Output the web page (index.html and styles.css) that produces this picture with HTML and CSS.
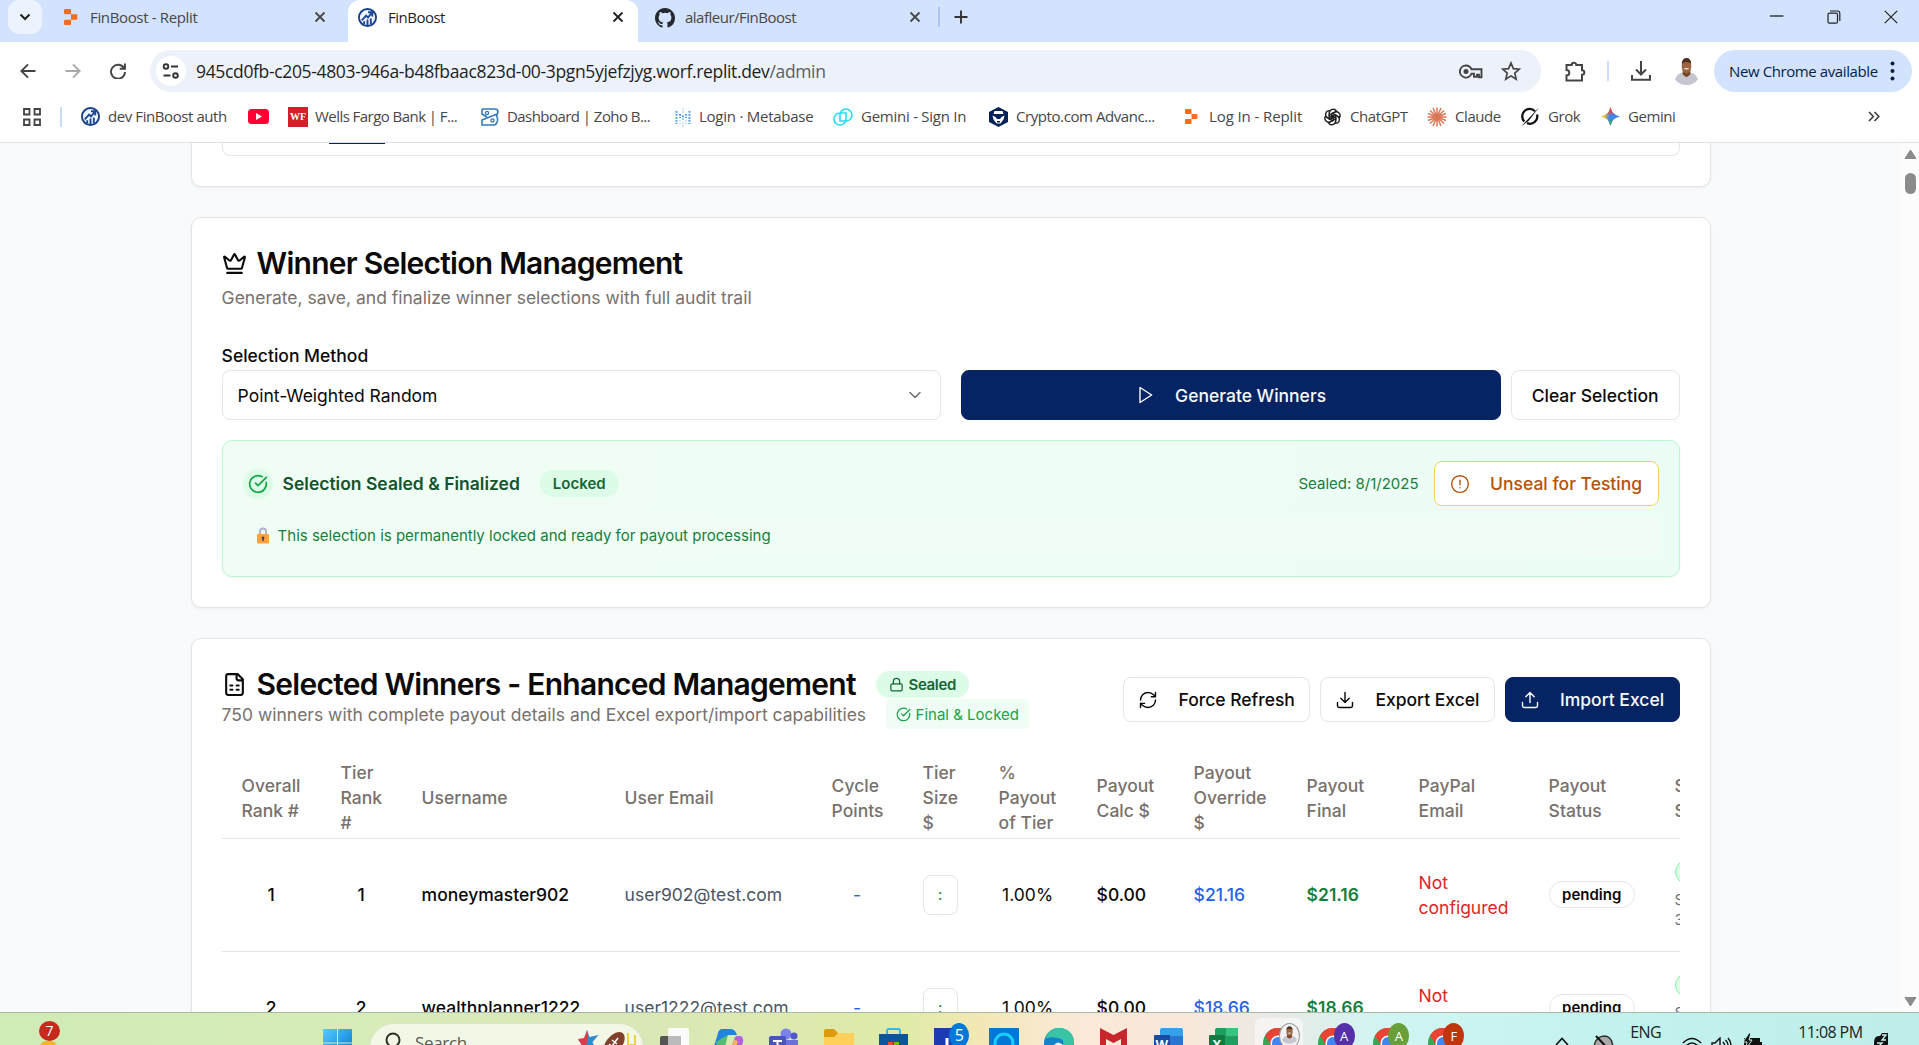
FILE: index.html
```html
<!DOCTYPE html>
<html lang="en">
<head>
<meta charset="utf-8">
<title>FinBoost</title>
<link rel="stylesheet" href="styles.css">
</head>
<body>
<svg class="defs" aria-hidden="true">
  <symbol id="replit" viewBox="0 0 16 18"><path fill="#f96a1b" d="M2 1h5a1 1 0 0 1 1 1v4.300H2a1.200 1.200 0 0 1-1-1.200V2a1 1 0 0 1 1-1zM8 6.300h5.300a1 1 0 0 1 1 1v3.400a1 1 0 0 1-1 1H8zM2 11.700h6V16a1 1 0 0 1-1 1H2a1 1 0 0 1-1-1v-3.100a1.200 1.200 0 0 1 1-1.200z"/></symbol>
  <symbol id="fin" viewBox="0 0 20 20"><circle cx="10" cy="10" r="9" fill="#f4f8ff" stroke="#173f8a" stroke-width="2"/><path d="M4 13l4.500-5 2 2 4-5M10.500 4.500h4.500V9M6.500 17v-3M10 18v-6M13.500 17v-6" fill="none" stroke="#1b4796" stroke-width="2"/></symbol>
  <symbol id="x" viewBox="0 0 12 12"><path d="M1.500 1.500l9 9M10.500 1.500l-9 9" stroke="currentColor" stroke-width="1.800" fill="none"/></symbol>
  <symbol id="check" viewBox="0 0 24 24"><path d="M21.800 10A10 10 0 1 1 17 3.300M9 11l3 3L22 4" fill="none" stroke="currentColor" stroke-width="2" stroke-linecap="round" stroke-linejoin="round"/></symbol>
  <symbol id="chrome" viewBox="0 0 30 30"><circle cx="15" cy="15" r="15" fill="#34a853"/><path d="M2 7.500A15 15 0 0 1 28 7.500H15L9 19z" fill="#ea4335"/><path d="M28 7.500A15 15 0 0 1 15 30l6.500-11.500L15 7.500z" fill="#fbbc04"/><circle cx="15" cy="15" r="7.500" fill="#fff"/><circle cx="15" cy="15" r="6" fill="#4285f4"/></symbol>
  <symbol id="face" viewBox="0 0 24 28"><path d="M0 22q2-6 8-7h8q6 1 8 7-4 6-12 6T0 22z" fill="#c5c6d0"/><path d="M8 12h8v5l-4 3-4-3z" fill="#744526"/><ellipse cx="12" cy="8.500" rx="5" ry="7.500" fill="#9a6540"/><path d="M7 6Q7.500 0 12 0t5 6Q12 2 7 6z" fill="#4a2f1f"/><path d="M9 10.500q3 3 6 0z" fill="#fff"/></symbol>
</svg>

<header class="browser">
  <div class="tabs">
    <span class="tabsearch"><svg width="12" height="8" viewBox="0 0 12 8"><path d="M1.500 1.500L6 6l4.500-4.500" fill="none" stroke="#1f1f1f" stroke-width="2"/></svg></span>
    <div class="tab first"><svg width="16" height="18"><use href="#replit"/></svg><span>FinBoost - Replit</span><svg class="close" width="12" height="12"><use href="#x"/></svg></div>
    <div class="tab active"><svg width="19" height="19"><use href="#fin"/></svg><span>FinBoost</span><svg class="close" width="12" height="12"><use href="#x"/></svg></div>
    <div class="tab third"><svg width="20" height="20" viewBox="0 0 16 16"><path fill="#24292f" d="M8 0C3.580 0 0 3.580 0 8c0 3.540 2.290 6.530 5.470 7.590.4.070.55-.17.55-.38 0-.19-.01-.82-.01-1.490-2.010.37-2.530-.49-2.690-.94-.09-.23-.48-.94-.82-1.130-.28-.15-.68-.52-.01-.53.63-.01 1.080.58 1.230.82.72 1.210 1.870.87 2.330.66.07-.52.28-.87.51-1.070-1.780-.2-3.640-.89-3.640-3.950 0-.87.31-1.590.82-2.150-.08-.2-.36-1.020.08-2.120 0 0 .67-.21 2.200.82a7.600 7.600 0 0 1 4 0c1.530-1.040 2.200-.82 2.200-.82.44 1.100.16 1.920.08 2.120.51.56.82 1.270.82 2.150 0 3.070-1.870 3.750-3.650 3.950.29.25.54.73.54 1.480 0 1.070-.01 1.930-.01 2.200 0 .21.15.46.55.38A8 8 0 0 0 16 8c0-4.420-3.580-8-8-8z"/></svg><span>alafleur/FinBoost</span><svg class="close" width="12" height="12"><use href="#x"/></svg></div>
    <i class="tabsep"></i>
    <svg class="plus" width="14" height="14" viewBox="0 0 14 14"><path d="M7 .5v13M.5 7h13" stroke="#333" stroke-width="1.900"/></svg>
    <div class="wincontrols">
      <svg width="14" height="14" viewBox="0 0 14 14"><path d="M0 6h13.500" stroke="#111" stroke-width="1.200"/></svg>
      <svg width="14" height="14" viewBox="0 0 14 14"><rect x="1" y="3.200" width="9.500" height="10" rx="1.500" fill="none" stroke="#222" stroke-width="1.200"/><path d="M3 1h7.500a2.300 2.300 0 0 1 2.300 2.300V11" fill="none" stroke="#222" stroke-width="1.200"/></svg>
      <svg width="14" height="14" viewBox="0 0 14 14"><path d="M.8.8l12.400 12.400M13.200.8L.8 13.200" stroke="#222" stroke-width="1.200"/></svg>
    </div>
  </div>
  <div class="toolbar">
    <svg class="nav" width="16" height="16" viewBox="0 0 16 16"><path d="M15.500 8H1.500M8 1.300L1.300 8 8 14.700" fill="none" stroke="#444" stroke-width="1.900"/></svg>
    <svg class="nav" width="16" height="16" viewBox="0 0 16 16"><path d="M.5 8h14M8 1.300L14.700 8 8 14.700" fill="none" stroke="#a9a9ab" stroke-width="1.900"/></svg>
    <svg class="nav" width="16" height="16" viewBox="0 0 16 16"><path d="M14.200 5.500A7 7 0 1 0 15 9M15 .5v5.300H9.700" fill="none" stroke="#444" stroke-width="1.900"/></svg>
    <div class="url">
      <span class="site"><svg width="18" height="16" viewBox="0 0 18 16"><g fill="none" stroke="#333" stroke-width="1.900"><circle cx="4" cy="3.500" r="2.300"/><path d="M9 3.500h7M1.500 12.500h7"/><circle cx="13.500" cy="12.500" r="2.300"/></g></svg></span>
      <span class="addr">945cd0fb-c205-4803-946a-b48fbaac823d-00-3pgn5yjefzjyg.worf.replit.dev<em>/admin</em></span>
      <svg class="key" width="24" height="15" viewBox="0 0 24 15"><path d="M7 1.500a6 6 0 1 0 5.500 8.200h2.500v3h3v-2h2v2.500h2.500V5.300h-10A6 6 0 0 0 7 1.500z" fill="none" stroke="#444" stroke-width="1.900"/><circle cx="7" cy="7.500" r="2.500" fill="#444"/></svg>
      <svg width="20" height="20" viewBox="0 0 20 20"><path d="M10 2l2.400 5.600 6 .5-4.600 4 1.400 6L10 14.900l-5.200 3.200 1.400-6-4.600-4 6-.5z" fill="none" stroke="#444" stroke-width="1.700"/></svg>
    </div>
    <svg class="ext" width="21" height="21" viewBox="0 0 21 21"><path d="M1.500 4h5.200a2.300 2.300 0 0 1 4.600 0h5.700v5.200a2.300 2.300 0 0 1 0 4.600v5.700H1.500v-5a2.800 2.800 0 0 0 0-5.600z" fill="none" stroke="#444" stroke-width="2"/></svg>
    <i class="toolsep"></i>
    <svg class="dl" width="20" height="20" viewBox="0 0 20 20"><path d="M10 0v13M5 8.500l5 5 5-5M1 14v4.800h18V14" fill="none" stroke="#444" stroke-width="2"/></svg>
    <svg class="avatar" width="23" height="27"><use href="#face"/></svg>
    <div class="update"><span>New Chrome available</span><svg width="5" height="20" viewBox="0 0 5 20"><g fill="#041e49"><circle cx="2.500" cy="2.500" r="2"/><circle cx="2.500" cy="10" r="2"/><circle cx="2.500" cy="17.500" r="2"/></g></svg></div>
  </div>
  <nav class="bookmarks">
    <div><svg width="18" height="18" viewBox="0 0 18 18"><path d="M1 1h5.500v5.500H1zM11.500 1H17v5.500h-5.500zM1 11.500h5.500V17H1zM11.500 11.500H17V17h-5.500z" fill="none" stroke="#444" stroke-width="1.800"/></svg></div>
    <div><i class="toolsep"></i></div>
    <div><svg width="19" height="19"><use href="#fin"/></svg><span>dev FinBoost auth</span></div>
    <div><svg width="21" height="15" viewBox="0 0 21 15"><rect width="21" height="15" rx="3.500" fill="#ff0033"/><path d="M8 4l6 3.500L8 11z" fill="#fff"/></svg></div>
    <div class="tight"><b class="wf">WF</b><span>Wells Fargo Bank | F...</span></div>
    <div class="tight"><svg width="20" height="20" viewBox="0 0 20 20"><path d="M2 2h13q3 0 3 3l-1.500 4q1.500 2 1 5-1 4-4 4H2v-5L17 7M2 2v5l5 3" fill="none" stroke="#357ab8" stroke-width="1.600"/><circle cx="7" cy="6" r="1.600" fill="none" stroke="#357ab8" stroke-width="1.300"/><circle cx="12.500" cy="13.500" r="1.600" fill="none" stroke="#357ab8" stroke-width="1.300"/></svg><span>Dashboard | Zoho B...</span></div>
    <div><svg width="16" height="20" viewBox="0 0 16 20"><g stroke="#509ee3" stroke-width="2" stroke-dasharray="1.800 1.200"><path d="M1.500 4v13M14.500 4v13M5 7v4M11 7v4M8 8.500v4"/><path d="M5 13v4M11 13v4M8 1v5M8 15v5" opacity=".3"/></g></svg><span class="wide">Login · Metabase</span></div>
    <div><svg width="20" height="20" viewBox="0 0 20 20"><path d="M7 8a6 6 0 1 1 6 6H7V8zM13 12a6 6 0 1 1-6-6h6v6z" transform="translate(0 0)" fill="none" stroke="#27dbf4" stroke-width="1.600"/></svg><span class="wide">Gemini - Sign In</span></div>
    <div><svg width="19" height="20" viewBox="0 0 19 20"><path d="M9.500 0L19 5v10l-9.500 5L0 15V5z" fill="#06225b"/><path d="M5.500 4h8l1 3h-10zM3.500 8.500l3 1.500 1.500 2h3l1.500-2 3-1.500-1 4-3 4h-4l-3-4z" fill="#fff"/><path d="M8 8h3l-.5 3h-2zM8 14h3v1.500H8z" fill="#06225b"/></svg><span>Crypto.com Advanc...</span></div>
    <div><svg width="15" height="17"><use href="#replit"/></svg><span class="loose">Log In - Replit</span></div>
    <div><svg width="19" height="18" viewBox="-10 -10 20 20"><g fill="none" stroke="#222" stroke-width="1.500"><path id="petal" d="M-3.500 3V-4.500a4.300 4.300 0 0 1 8-2L-1 -3.500V2"/><use href="#petal" transform="rotate(60)"/><use href="#petal" transform="rotate(120)"/><use href="#petal" transform="rotate(180)"/><use href="#petal" transform="rotate(240)"/><use href="#petal" transform="rotate(300)"/></g></svg><span>ChatGPT</span></div>
    <div><svg width="20" height="20" viewBox="-10 -10 20 20"><path d="M0-9.500V9.500M-9.500 0H9.500M-7-6.500L7 6.500M7-6.500L-7 6.500M-4-9L4 9M4-9L-4 9M-9-3.500L9 3.500M9-3.500L-9 3.500" stroke="#d97757" stroke-width="1.500"/></svg><span>Claude</span></div>
    <div><svg width="20" height="20" viewBox="0 0 20 20"><path d="M15 4.200A7.200 7.200 0 0 0 4.300 14.500M17 7.500A7.200 7.200 0 0 1 7 16" fill="none" stroke="#111" stroke-width="2.300"/><path d="M1 19.500L19.500 0 8.500 14z" fill="#111"/></svg><span>Grok</span></div>
    <div><svg width="19" height="19" viewBox="0 0 20 20"><defs><linearGradient id="gm" x1="0" y1=".4" x2="1" y2=".6"><stop offset="0" stop-color="#fbbc04"/><stop offset=".25" stop-color="#d3b53c"/><stop offset=".45" stop-color="#4285f4"/><stop offset="1" stop-color="#4285f4"/></linearGradient><linearGradient id="gv" x1="0" y1="0" x2="0" y2="1"><stop offset="0" stop-color="#ea4335"/><stop offset=".2" stop-color="#ea4335"/><stop offset=".45" stop-color="#ea4335" stop-opacity="0"/><stop offset=".6" stop-color="#34a853" stop-opacity="0"/><stop offset=".85" stop-color="#34a853"/></linearGradient></defs><path d="M10 0q1.500 8.500 10 10-8.500 1.500-10 10-1.500-8.500-10-10 8.500-1.500 10-10z" fill="url(#gm)"/><path d="M10 0q1.500 8.500 10 10-8.500 1.500-10 10-1.500-8.500-10-10 8.500-1.500 10-10z" fill="url(#gv)"/></svg><span>Gemini</span></div>
    <div><svg width="12" height="11" viewBox="0 0 12 11"><path d="M1 1l4.300 4.500L1 10M6.500 1l4.300 4.500L6.500 10" fill="none" stroke="#444" stroke-width="1.700"/></svg></div>
  </nav>
</header>

<div class="viewport">
  <main class="page">
    <section class="card top"><div class="inner"><i></i></div></section>

    <section class="card selection">
      <h2><svg width="25" height="25" viewBox="0 0 24 24" class="ln"><path d="M11.562 3.266a.5.5 0 0 1 .876 0L15.390 8.870a1 1 0 0 0 1.516.294L21.183 5.500a.5.5 0 0 1 .798.519l-2.834 10.246a1 1 0 0 1-.956.734H5.810a1 1 0 0 1-.957-.734L2.020 6.020a.5.5 0 0 1 .798-.519l4.276 3.664a1 1 0 0 0 1.516-.294zM5 21h14"/></svg>Winner Selection Management</h2>
      <p class="muted sub">Generate, save, and finalize winner selections with full audit trail</p>
      <label class="lbl">Selection Method</label>
      <div class="controls">
        <div class="select">Point-Weighted Random<svg width="20" height="20" viewBox="0 0 24 24" class="ln"><path d="M6 9l6 6 6-6"/></svg></div>
        <div class="btn primary gen"><svg width="20" height="20" viewBox="0 0 24 24" class="ln"><path d="M6 3l14 9-14 9z"/></svg>Generate Winners</div>
        <div class="btn clear">Clear Selection</div>
      </div>
      <div class="sealed">
        <div class="sealrow">
          <span class="disc"><svg width="20" height="20"><use href="#check"/></svg></span>
          <strong>Selection Sealed &amp; Finalized</strong>
          <span class="pill">Locked</span>
          <span class="date">Sealed: 8/1/2025</span>
          <div class="btn unseal"><svg width="20" height="20" viewBox="0 0 24 24" class="ln"><circle cx="12" cy="12" r="10"/><path d="M12 7.500V13M12 16.500v.1"/></svg>Unseal for Testing</div>
        </div>
        <div class="note"><svg width="14" height="17" viewBox="0 0 14 17"><path d="M4 8V4.500a3 3 0 0 1 6 0V8" fill="none" stroke="#b8b2c8" stroke-width="2"/><rect x="1" y="7" width="12" height="9.500" rx="1" fill="#f9a33b"/><path d="M7 9.500a1.300 1.300 0 0 1 .8 2.400V14H6.200v-2.100A1.300 1.300 0 0 1 7 9.500z" fill="#433b6b"/></svg>This selection is permanently locked and ready for payout processing</div>
      </div>
    </section>

    <section class="card winners">
      <div class="whead">
        <div class="wtext">
          <h2><svg width="25" height="25" viewBox="0 0 24 24" class="ln"><path d="M15 2H6a2 2 0 0 0-2 2v16a2 2 0 0 0 2 2h12a2 2 0 0 0 2-2V7zM14 2v4a2 2 0 0 0 2 2h4M8 13h2M14 13h2M8 17h2M14 17h2"/></svg>Selected Winners - Enhanced Management</h2>
          <p class="muted">750 winners with complete payout details and Excel export/import capabilities</p>
        </div>
        <div class="wbadges">
          <span class="pill snug"><svg width="15" height="15" viewBox="0 0 24 24" class="ln"><rect x="3" y="11" width="18" height="11" rx="2"/><path d="M7 11V7a5 5 0 0 1 10 0v4"/></svg>Sealed</span>
          <span class="final"><svg width="15" height="15"><use href="#check"/></svg>Final &amp; Locked</span>
        </div>
        <div class="actions">
          <div class="btn"><svg width="20" height="20" viewBox="0 0 24 24" class="ln"><path d="M3 12a9 9 0 0 1 9-9 9.750 9.750 0 0 1 6.740 2.740L21 8M21 3v5h-5M21 12a9 9 0 0 1-9 9 9.750 9.750 0 0 1-6.740-2.740L3 16M8 16H3v5"/></svg>Force Refresh</div>
          <div class="btn"><svg width="20" height="20" viewBox="0 0 24 24" class="ln"><path d="M21 15v4a2 2 0 0 1-2 2H5a2 2 0 0 1-2-2v-4M7 10l5 5 5-5M12 15V3"/></svg>Export Excel</div>
          <div class="btn primary"><svg width="20" height="20" viewBox="0 0 24 24" class="ln"><path d="M21 15v4a2 2 0 0 1-2 2H5a2 2 0 0 1-2-2v-4M17 8l-5-5-5 5M12 3v12"/></svg>Import Excel</div>
        </div>
      </div>
      <div class="tablewrap">
        <table>
          <colgroup><col class="c1"><col class="c2"><col class="c3"><col class="c4"><col class="c5"><col class="c6"><col class="c7"><col class="c8"><col class="c9"><col class="c10"><col class="c11"><col class="c12"><col class="c13"></colgroup>
          <thead><tr><th>Overall Rank #</th><th>Tier<br>Rank<br>#</th><th>Username</th><th>User Email</th><th>Cycle Points</th><th>Tier Size<br>$</th><th>%<br>Payout of Tier</th><th>Payout Calc $</th><th>Payout Override<br>$</th><th>Payout Final</th><th>PayPal Email</th><th>Payout Status</th><th>Seal<br>Status</th></tr></thead>
          <tbody>
            <tr><td class="mid med">1</td><td class="mid med">1</td><td class="med">moneymaster902</td><td class="gray">user902@test.com</td><td class="mid blue">-</td><td><span class="input">:</span></td><td class="mid">1.00%</td><td class="med">$0.00</td><td class="med blue">$21.16</td><td class="semi green">$21.16</td><td class="red">Not configured</td><td><span class="status">pending</span></td><td class="seal"><span class="sealpill">Sealed</span><small>Sealed</small><small>31.1</small></td></tr>
            <tr><td class="mid med">2</td><td class="mid med">2</td><td class="med">wealthplanner1222</td><td class="gray">user1222@test.com</td><td class="mid blue">-</td><td><span class="input">:</span></td><td class="mid">1.00%</td><td class="med">$0.00</td><td class="med blue">$18.66</td><td class="semi green">$18.66</td><td class="red">Not configured</td><td><span class="status">pending</span></td><td class="seal"><span class="sealpill">Sealed</span><small>Sealed</small><small>31.1</small></td></tr>
          </tbody>
        </table>
      </div>
    </section>
  </main>
  <div class="scroll"><svg width="13" height="11" viewBox="0 0 13 11"><path d="M6.500 1L12 9.500H1z" fill="#8b8b8b" stroke="#8b8b8b" stroke-linejoin="round"/></svg><i></i><svg class="down" width="13" height="11" viewBox="0 0 13 11"><path d="M6.500 10L12 1.500H1z" fill="#8b8b8b" stroke="#8b8b8b" stroke-linejoin="round"/></svg></div>
</div>

<footer class="taskbar">
  <div class="widget"><b>7</b><i></i></div>
  <div class="slot"><svg width="29" height="29" viewBox="0 0 29 29"><defs><linearGradient id="wn" x1="0" y1="0" x2="1" y2="1"><stop offset="0" stop-color="#52ceff"/><stop offset="1" stop-color="#0670cc"/></linearGradient></defs><path fill="url(#wn)" d="M0 1h14v13.500H0zM15 1h14v13.500H15zM0 15.500h14V29H0zM15 15.500h14V29H15z"/></svg></div>
  <div class="search"><svg width="18" height="20" viewBox="0 0 18 20"><circle cx="9" cy="8" r="6.500" fill="none" stroke="#2a332a" stroke-width="2"/><path d="M4.500 13L1 17" stroke="#2a332a" stroke-width="2"/></svg><span>Search</span><svg class="star" width="62" height="26" viewBox="0 0 62 26"><path d="M9 0l2.500 7 9-2-6 7 4 10-8.500-5-8 5 3-8-5-4 7-1z" fill="#2e8bd0"/><path d="M9 0l1 9-2 7-6 6 1-8-3-5 6-1z" fill="#dc3d49"/><ellipse cx="36" cy="14" rx="8" ry="14" transform="rotate(38 36 14)" fill="#81402a"/><path d="M31 20l9-12M31 14l5 4M34 10l5 4" stroke="#fff" stroke-width="1.500"/><path d="M50 3v12h7V5M53.500 15v10" fill="none" stroke="#eed339" stroke-width="2"/></svg></div>
  <div class="slot"><svg width="29" height="29" viewBox="0 0 29 29"><rect x="8" width="21" height="22" rx="2" fill="#fbfbfb"/><rect y="8" width="21" height="21" rx="2" fill="#555"/><path d="M8 8h13v14H8z" fill="#bbb"/></svg></div>
  <div class="slot"><svg width="30" height="29" viewBox="0 0 30 29"><path d="M8 1h9q4 0 6 6H15q-4 0-6 8L7 22H3q-4-2-2-7l3-10q1-4 4-4z" fill="#2083de"/><path d="M2 14l3 8h5l4-15-4 2z" fill="#50bd74"/><path d="M23 8h4q3 2 2 6l-4 12q-2 3-6 3h-6l7-17q1-4 3-4z" fill="#b760d7"/><path d="M20 12l4 1-4 12h-5z" fill="#f9b45a"/></svg></div>
  <div class="slot"><svg width="30" height="29" viewBox="0 0 30 29"><circle cx="17" cy="6" r="5.500" fill="#7b83eb"/><circle cx="25" cy="8" r="3.500" fill="#5059c9"/><path d="M11 12h18v10q-4 8-12 7z" fill="#6972da"/><rect y="8" width="17" height="17" rx="2" fill="#4b53bc"/><path d="M4 13h9M8.500 13v9" stroke="#fff" stroke-width="2"/></svg></div>
  <div class="slot"><svg width="30" height="29" viewBox="0 0 30 29"><path d="M0 3q0-2 2-2h8l4 4h14q2 0 2 2v8H0z" fill="#dd9c0d"/><path d="M0 9h10l4-4h14q2 0 2 2v20H0z" fill="#ffd05a"/></svg></div>
  <div class="slot"><svg width="29" height="29" viewBox="0 0 29 29"><path d="M8 8V3q0-2 2-2h9q2 0 2 2v5" fill="none" stroke="#31b9ee" stroke-width="2"/><path d="M0 6h29v20H0z" fill="#0b559c"/><path d="M9 14h5v5H9zM9 20h5v5H9z" fill="#f04e2b"/><path d="M15 14h5v5h-5zM15 20h5v5h-5z" fill="#7cba00"/></svg></div>
  <div class="slot count"><svg width="30" height="29" viewBox="0 0 30 29"><path d="M0 0h30v29H0z" fill="#1d3bb3"/><path d="M13 10v19" stroke="#fff" stroke-width="3"/></svg><b>5</b></div>
  <div class="slot"><svg width="30" height="29" viewBox="0 0 30 29"><path d="M0 0h30v29H0z" fill="#0078d7"/><circle cx="15" cy="15" r="9" fill="none" stroke="#15cffa" stroke-width="3"/></svg></div>
  <div class="slot"><svg width="30" height="29" viewBox="0 0 30 29"><circle cx="15" cy="15" r="15" fill="#1682c9"/><path d="M1 11Q5 0 15 0q15 1 15 15-2 7-12 4 4-8-4-9Q5 8 1 11z" fill="#39c5a5"/><path d="M10 17q4-5 9 0l-1 5h-8z" fill="#e9f5ec"/></svg></div>
  <div class="slot"><svg width="27" height="29" viewBox="0 0 27 29"><path d="M0 0l13.500 7L27 0v25l-6 4V11l-7.500 4L6 11v18l-6-4z" fill="#c8252d"/></svg></div>
  <div class="slot"><svg width="29" height="29" viewBox="0 0 29 29"><rect x="6" width="23" height="29" rx="2" fill="#37a0ea"/><path d="M6 8h23v10H6z" fill="#2876d1"/><rect y="7" width="16" height="17" rx="1" fill="#1a4ba2"/></svg><em>W</em></div>
  <div class="slot"><svg width="29" height="29" viewBox="0 0 29 29"><rect x="6" width="23" height="29" rx="2" fill="#1f9e61"/><path d="M17 0h12v8H17z" fill="#35c481"/><rect y="7" width="16" height="17" rx="1" fill="#107c41"/></svg><em>X</em></div>
  <div class="slot chrome on"><svg width="30" height="30"><use href="#chrome"/></svg><b class="me"><svg width="15" height="18"><use href="#face"/></svg></b></div>
  <div class="slot chrome"><svg width="30" height="30"><use href="#chrome"/></svg><b class="pa">A</b></div>
  <div class="slot chrome"><svg width="30" height="30"><use href="#chrome"/></svg><b class="ga">A</b></div>
  <div class="slot chrome"><svg width="30" height="30"><use href="#chrome"/></svg><b class="rf">F</b></div>
  <div class="tray">
    <svg width="14" height="9" viewBox="0 0 14 9"><path d="M1 8l6-6.500L13 8" fill="none" stroke="#111" stroke-width="1.600"/></svg>
    <svg class="bell" width="21" height="20" viewBox="0 0 21 20"><path d="M1 12Q2 2 11 1q8 0 9 11v8H1z" fill="#aaa" stroke="#333" stroke-width="1.500"/><path d="M3 1l17 18" stroke="#111" stroke-width="2"/></svg>
    <span class="lang">ENG</span>
    <svg width="20" height="15" viewBox="0 0 20 15"><path d="M1 6q9-9 18 0M4 9q6-6 12 0M7 12q3-3 6 0" fill="none" stroke="#111" stroke-width="1.600"/><circle cx="10" cy="14" r="1.500"/></svg>
    <svg width="21" height="16" viewBox="0 0 21 16"><path d="M1 6h3l5-5v14l-5-4H1zM12 5q3 3 0 6M14.500 3q5 5 0 10M17 1q6 7 0 14" fill="none" stroke="#111" stroke-width="1.400"/></svg>
    <svg class="battery" width="21" height="19" viewBox="0 0 21 19"><path d="M2 5h16v4h2v5h-2v5H2z" fill="#111"/><path d="M7 0L1 9h4l-1 7 6-9H7l2-7z" fill="#111" stroke="#c4f2ee"/></svg>
    <span class="time">11:08 PM</span>
    <svg class="dnd" width="14" height="20" viewBox="0 0 14 20"><path d="M0 20V10q0-8 6-7l2-3h6v12h-2v8z" fill="#111"/><path d="M8 2h4L8 7h4M3 10h5l-5 5h5" fill="none" stroke="#c4f2ee" stroke-width="1.400"/></svg>
  </div>
</footer>
</body>
</html>
```
FILE: styles.css
```css
* { box-sizing: border-box; }
html, body { margin: 0; height: 1045px; overflow: hidden; }
body { display: flex; flex-direction: column; font-family: Inter, sans-serif; font-size: 17.5px; line-height: 25px; color: #0c0a09; background: #f8fafc; }
svg { display: block; flex: none; }
i, em { font-style: normal; }
h2, p { margin: 0; }
.defs { position: absolute; width: 0; height: 0; }
.ln { fill: none; stroke: currentColor; stroke-width: 2; stroke-linecap: round; stroke-linejoin: round; }
.btn .ln, .select .ln { stroke-width: 1.7; }

/* browser frame */
.browser { height: 143px; flex: none; background: #fff; border-bottom: 1px solid #dfe0e2; font-family: "Open Sans", sans-serif; font-size: 15px; color: #474747; }
.tabs { height: 42px; background: #d3e2fd; display: flex; align-items: flex-start; }
.tabsearch { width: 34px; height: 34px; margin-left: 8px; border-radius: 11px; background: #ecf2fe; display: flex; align-items: center; justify-content: center; }
.tab { height: 42px; display: flex; align-items: flex-start; }
.tab > svg { margin-top: 8px; }
.tab > span { line-height: 35px; letter-spacing: -.5px; flex: 1; white-space: nowrap; }
.tab > .close { margin-top: 11px; }
.first { width: 306px; padding-left: 21px; padding-right: 22px; gap: 11px; border-bottom-right-radius: 14px; }
.first > span { letter-spacing: -.35px; }
.active { width: 290px; padding: 0 14px 0 10px; gap: 11px; background: #fff; color: #1f1f1f; border-radius: 12px 12px 0 0; }
.third { width: 299px; padding-left: 17px; padding-right: 16px; gap: 10px; }
.tabsep { width: 2px; height: 20px; margin-top: 7px; background: #a8c7fa; margin-left: 1px; }
.plus { margin: 10px 0 0 14px; }
.wincontrols { display: flex; gap: 43px; margin: 10px 21px 0 auto; }
.toolbar { height: 58px; display: flex; align-items: center; padding: 0 7px 0 20px; }
.nav { margin-right: 29px; }
.url { width: 1391px; height: 42px; margin-left: -5px; border-radius: 21px; background: #ecf1fa; display: flex; align-items: center; padding: 0 20px 0 6px; }
.site { width: 30px; height: 30px; border-radius: 50%; background: #fff; display: flex; align-items: center; justify-content: center; }
.addr { flex: 1; margin-left: 10px; font-size: 17.5px; letter-spacing: -.345px; color: #1f1f1f; white-space: nowrap; }
.addr em { color: #5b5e62; }
.key { margin-right: 18px; }
.ext { margin-left: 24px; }
.toolsep { width: 2px; height: 20px; background: #c9dcfb; display: block; }
.ext + .toolsep { margin-left: 21px; }
.dl { margin-left: 22px; }
.avatar { margin-left: 24px; }
.update { width: 198px; height: 42px; margin-left: auto; border-radius: 21px; background: #d3e3fd; color: #041e49; display: flex; align-items: center; justify-content: space-between; padding: 0 17px 0 15px; letter-spacing: -.4px; white-space: nowrap; }
.bookmarks { height: 33px; display: grid; padding-left: 23px; grid-template-columns: 37px 21px 167px 40px 192px 195px 158px 156px 195px 139px 104px 93px 81px 267px 30px; }
.bookmarks div { display: flex; align-items: center; gap: 8px; white-space: nowrap; letter-spacing: -.42px; }
.bookmarks .tight { letter-spacing: -.55px; gap: 7px; }
.bookmarks .wide { letter-spacing: -.25px; }
.bookmarks .loose { letter-spacing: -.1px; margin-left: 2px; }
.wf { width: 20px; height: 20px; background: #d71e28; color: #fff; font: bold 10px/20px "Liberation Serif", serif; text-align: center; letter-spacing: 0; }

/* page */
.viewport { height: 869px; flex: none; display: flex; overflow: hidden; background: #f8fafc; }
.page { flex: 1; padding-left: 190.6px; }
.card { width: 1520px; background: #fff; border: 1px solid #e5e5e7; border-radius: 10px; box-shadow: 0 1px 3px rgba(0,0,0,.06); padding: 0 30px; }
.top { height: 44px; border-top: 0; border-radius: 0 0 10px 10px; margin-bottom: 30px; }
.inner { height: 13px; border: 1px solid #e5e5e7; border-top: 0; border-radius: 0 0 8px 8px; }
.inner i { display: block; width: 56px; height: 1px; margin-left: 106px; background: #062463; }
.card h2 { display: flex; align-items: center; gap: 10px; font-size: 30px; line-height: 30px; font-weight: 600; letter-spacing: -.75px; white-space: nowrap; }
.muted { color: #78716c; }
.selection { height: 391px; padding-top: 30px; margin-bottom: 30px; }
.sub { margin-top: 7px; }
.lbl { display: block; margin-top: 33px; margin-bottom: 2px; font-weight: 500; }
.controls { display: flex; height: 50px; }
.select { width: 719px; border: 1px solid #e5e5e7; border-radius: 8px; display: flex; align-items: center; justify-content: space-between; padding: 0 15px; }
.select .ln { opacity: .6; }
.btn { height: 45px; border: 1px solid #e5e5e7; border-radius: 8px; display: flex; align-items: center; justify-content: center; gap: 20px; background: #fff; font-weight: 500; white-space: nowrap; }
.controls .btn { height: 50px; }
.btn.primary { background: #062463; border-color: #062463; color: #f8fafc; }
.gen { width: 540px; margin: 0 10px 0 20px; }
.clear { width: 169px; }
.sealed { height: 137px; margin-top: 20px; border: 1px solid #bbf7d0; border-radius: 10px; padding: 20px; background: linear-gradient(90deg, #f0fdf4, #ecfdf5); box-shadow: 0 1px 2px rgba(0,0,0,.05); }
.sealrow { display: flex; align-items: center; height: 45px; color: #15803d; }
.disc { width: 30px; height: 30px; border-radius: 50%; background: #dcfce7; color: #16a34a; display: flex; align-items: center; justify-content: center; }
.sealrow strong { font-weight: 600; color: #14532d; margin: 0 20px 0 10px; }
.pill { height: 27px; border-radius: 14px; padding: 0 13px; display: flex; align-items: center; gap: 5px; background: #dcfce7; color: #166534; font-size: 15px; font-weight: 600; }
.snug { letter-spacing: -.375px; }
.date { margin-left: auto; margin-right: 15px; font-size: 15px; }
.unseal { border-color: #fcd34d; color: #b45309; width: 225px; }
.note { height: 39px; margin-top: 10px; display: flex; align-items: center; gap: 8px; padding-left: 13px; font-size: 15px; color: #15803d; background: #f0fdf4; border-radius: 5px; }
.winners { height: 500px; }
.whead { display: flex; height: 121px; }
.wtext { padding-top: 30px; width: 645px; white-space: nowrap; }
.wtext p { margin-top: 3px; }
.wbadges { padding-top: 32px; margin-left: 9px; display: flex; flex-direction: column; align-items: flex-start; gap: 1px; }
.final { height: 30px; margin-left: 10px; padding: 0 10px; display: flex; align-items: center; gap: 5px; border-radius: 5px; background: #f0fdf4; color: #16a34a; font-size: 15px; }
.actions { display: flex; gap: 10px; margin-left: auto; padding-top: 38px; }
.actions .btn { padding: 0 14.5px 0 14px; }
.tablewrap { overflow: hidden; }
table { width: 1533px; table-layout: fixed; border-collapse: separate; border-spacing: 0; }
.c1 { width: 99px; } .c2 { width: 81px; } .c3 { width: 203px; } .c4 { width: 207px; } .c5 { width: 91px; } .c6 { width: 76px; } .c7 { width: 98px; } .c8 { width: 97px; } .c9 { width: 113px; } .c10 { width: 112px; } .c11 { width: 130px; } .c12 { width: 126px; } .c13 { width: 100px; }
th, td { padding: 0 0 1px 20px; text-align: left; vertical-align: middle; border-bottom: 1px solid #e5e5e7; }
th { height: 79px; font-weight: 500; color: #78716c; padding-right: 10px; padding-bottom: 3px; }
th:nth-child(6), th:nth-child(2) { padding-right: 0; }
td { height: 113px; }
td.mid { text-align: center; padding: 0 0 2px; }
td.med, td.gray, td.semi { padding-bottom: 2px; }
.med { font-weight: 500; } .semi { font-weight: 600; }
.gray { color: #4b5563; } .blue { color: #2563eb; } .green { color: #15803d; } .red { color: #dc2626; }
.input { display: block; width: 35px; height: 40px; border: 1px solid #e5e5e7; border-radius: 8px; text-align: center; line-height: 37px; color: #15803d; font-size: 15px; }
.status { display: inline-flex; align-items: center; height: 27px; padding: 0 12.500px; border: 1px solid #e5e5e7; border-radius: 14px; font-size: 15px; font-weight: 600; }
.seal small { display: block; font-size: 15px; line-height: 20px; color: #6b7280; }
.sealpill { display: flex; align-items: center; height: 24px; width: 90px; margin-bottom: 6px; padding-left: 13px; border: 1px solid #86efac; border-radius: 13px; background: #dcfce7; font-size: 15px; color: #166534; }
.scroll { width: 18px; background: #fcfcfc; display: flex; flex-direction: column; align-items: center; padding: 6px 0 5px 0; }
.scroll i { width: 11px; height: 21px; border-radius: 6px; background: #8b8b8b; margin-top: 13px; }
.down { margin-top: auto; }

/* taskbar */
.taskbar { height: 33px; flex: none; overflow: hidden; display: flex; border-top: 1px solid #aab8a6; font-family: "Open Sans", sans-serif; background: linear-gradient(90deg, #d0ebb6 0, #d7ecb9 20%, #d9e7b8 32%, #dfeba8 47%, #f2e8b4 51%, #fbe9d8 56%, #f8e8da 62%, #ece9e5 66%, #d0f5f2 72%, #c2f2ee 85%, #bfeeea 100%); }
.widget { width: 310px; flex: none; padding: 8px 0 0 39px; }
.widget b { display: block; width: 21px; height: 20px; border-radius: 50%; background: #c62a1e; color: #fff; font-weight: 400; font-size: 14px; line-height: 20px; text-align: center; }
.widget i { display: block; width: 17px; height: 10px; margin-left: 1px; border-radius: 6px 6px 0 0; background: #f4b62b; }
.slot { width: 54.900px; height: 46px; flex: none; padding-top: 15px; display: flex; justify-content: center; align-items: flex-start; position: relative; }
.slot > em { position: absolute; left: 13px; top: 22px; width: 16px; text-align: center; color: #fff; font-size: 13px; font-weight: 700; line-height: 18px; }
.slot > b { position: absolute; left: 28px; top: 10px; width: 21px; border-radius: 50%; color: #fff; text-align: center; font-size: 13px; font-weight: 400; }
.count > b { background: #0078d7; font-size: 16px; width: 20px; height: 25px; line-height: 24px; }
.slot.chrome > b { height: 26px; line-height: 26px; }
.me { background: #f2f2f2; border: 1px solid #999; display: flex; justify-content: center; padding-top: 2px; }
.pa { background: #5530a8; } .ga { background: #689f38; } .rf { background: #bf360c; }
.on::before { content: ""; position: absolute; left: 4px; top: 5px; width: 48px; height: 50px; border-radius: 6px; background: rgba(255,255,255,.5); }
.on > svg { position: relative; }
.search { width: 275px; flex: none; height: 50px; margin: 10px 3px 0 4px; border-radius: 25px; background: #f2f7e6; border: 1px solid #dce5cc; display: flex; align-items: flex-start; padding: 8px 3px 0 14px; color: #555d54; font-size: 17px; letter-spacing: -.3px; }
.search span { margin: -2px auto 0 13px; }
.star { margin-top: -2px; }
.tray { flex: 1; padding: 24px 18px 0 85px; display: grid; grid-template-columns: 38px 37px 52px 29px 31px 56px 76px 14px; color: #222; font-size: 16px; }
.bell { margin-top: -2px; }
.battery, .dnd { margin-top: -4px; }
.lang, .time { margin-top: -17px; line-height: 24px; letter-spacing: -.6px; white-space: nowrap; }
```
